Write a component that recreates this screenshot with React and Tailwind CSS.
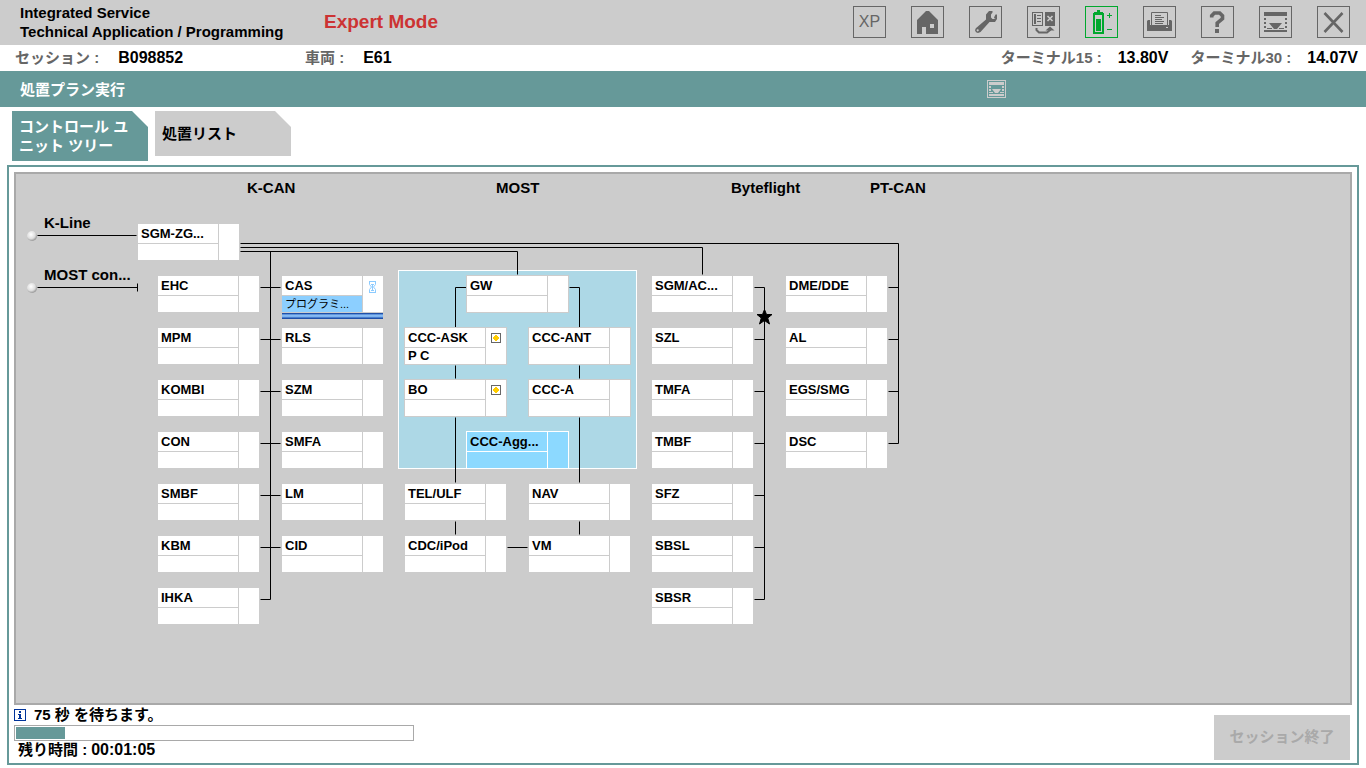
import React from "react";

const ROW_TOP = 101;
const ROW_STEP = 52;

const COLUMNS = [
  { x: 141, names: ["EHC", "MPM", "KOMBI", "CON", "SMBF", "KBM", "IHKA"] },
  { x: 265, names: ["CAS", "RLS", "SZM", "SMFA", "LM", "CID"] },
  { x: 388, names: [null, "CCC-ASK", "BO", null, "TEL/ULF", "CDC/iPod"] },
  { x: 450, names: ["GW", null, null, "CCC-Agg..."] },
  { x: 512, names: [null, "CCC-ANT", "CCC-A", null, "NAV", "VM"] },
  { x: 635, names: ["SGM/AC...", "SZL", "TMFA", "TMBF", "SFZ", "SBSL", "SBSR"] },
  { x: 769, names: ["DME/DDE", "AL", "EGS/SMG", "DSC"] },
];

const DETAILS = {
  CAS: { status: "プログラミ...", busy: true },
  "CCC-ASK": { status: "P C", marked: true },
  BO: { marked: true },
  "CCC-Agg...": { selected: true },
};

const NODES = [
  { name: "SGM-ZG...", x: 121, y: 49 },
  ...COLUMNS.flatMap((col) =>
    col.names
      .map((name, row) => ({ name, x: col.x, y: ROW_TOP + row * ROW_STEP }))
      .filter((n) => n.name)
  ),
];

const BUS_LABELS = [
  { text: "K-CAN", place: "left-[231px] top-1" },
  { text: "MOST", place: "left-[480px] top-1" },
  { text: "Byteflight", place: "left-[715px] top-1" },
  { text: "PT-CAN", place: "left-[854px] top-1" },
  { text: "K-Line", place: "left-[28px] top-[39px]" },
  { text: "MOST con...", place: "left-[28px] top-[91px]" },
];

function Hourglass() {
  return (
    <svg width="9" height="12" viewBox="0 0 9 12" fill="none" stroke="#8ccbff" aria-hidden="true">
      <path d="M1 .5h7M1 11.5h7M1.500 1v2.500l2 2.500-2 2.500V11M7.500 1v2.500l-2 2.500 2 2.500V11" />
      <path d="M3 3.500h3M4.500 4v5M3 9.500h3" />
    </svg>
  );
}

function Marker() {
  return (
    <svg width="10" height="10" viewBox="0 0 10 10" aria-hidden="true">
      <rect x=".5" y=".5" width="9" height="9" fill="#fff" stroke="#666" />
      <path d="M4 2h2v1h1v1h1v2H7v1H6v1H4V7H3V6H2V4h1V3h1z" fill="#fc0" />
    </svg>
  );
}

function ControlUnit({ name, x, y }) {
  const { status, busy, marked, selected } = DETAILS[name] || {};
  const frame = selected ? "border-white bg-white" : "border-[#ccc] bg-[#ccc]";
  const cell = selected ? "bg-[#8cd9ff]" : "bg-white";
  return (
    <div className="absolute" style={{ left: x, top: y }}>
      <button
        type="button"
        className={`grid grid-cols-[80px_20px] grid-rows-[19px_16px] gap-px border text-left ${frame}`}
      >
        <span className={`px-[3px] text-[13px] leading-[19px] font-bold whitespace-nowrap ${cell}`}>{name}</span>
        <span className={`row-span-2 flex pt-[5px] pl-[5px] ${cell}`}>
          {busy && <Hourglass />}
          {marked && <Marker />}
        </span>
        <span
          className={`px-[3px] leading-4 whitespace-nowrap ${
            busy ? "bg-[#8ccfff] text-[11px]" : `text-[13px] font-bold ${cell}`
          }`}
        >
          {status}
        </span>
      </button>
      {busy && (
        <div className="mx-px h-1.5 border-y border-[#2050a8] bg-linear-to-b from-[#4a80d0] via-[#9ccfff] to-[#2c62bc]" />
      )}
    </div>
  );
}

function Wiring() {
  const rows = [0, 1, 2, 3, 4, 5, 6].map((r) => 113 + r * ROW_STEP);
  return (
    <svg className="absolute top-0 left-0" width="900" height="460" viewBox="0 0 900 460" aria-hidden="true">
      <defs>
        <radialGradient id="ball" cx=".4" cy=".35" r=".7">
          <stop offset="0" stopColor="#fff" />
          <stop offset=".6" stopColor="#ddd" />
          <stop offset="1" stopColor="#888" />
        </radialGradient>
      </defs>
      <g transform="translate(.5 .5)" fill="none" stroke="#000">
        <path d="M21 61H120M21 113H121M121 109V117" />
        <path d="M224 69H882V269M224 73H686V100M224 77H501V100M254 77V425" />
        <path d="M450 113H439V153M553 113H563V153M439 191V204M563 191V204M439 243V308M563 243V308M439 347V360M563 347V360M491 373H511" />
        <path d="M748 113V425" />
        {rows.map((y, i) => (
          <path key={y} d={`M244 ${y}H${i < 6 ? 264 : 254}M738 ${y}H748${i < 4 ? `M872 ${y}H882` : ""}`} />
        ))}
      </g>
      <circle cx="16" cy="62" r="5" fill="url(#ball)" />
      <circle cx="16" cy="114" r="5" fill="url(#ball)" />
      <path d="M748.500 135.500l2 5h5.500l-4.300 3.500 1.800 6-5-3.500-5 3.500 1.800-6-4.300-3.500h5.500z" fill="#000" stroke="#000" />
    </svg>
  );
}

const TOOLS = [
  { label: "XP", art: <span className="text-[16px] leading-none">XP</span> },
  {
    label: "Home",
    art: <path fill="currentColor" d="M15 5h3l9 9v14H15v-7h-4v7H6V14zM19 18v4h4v-4z" fillRule="evenodd" />,
  },
  {
    label: "Settings",
    art: (
      <g>
        <path
          fill="currentColor"
          d="M20 5h3.500v1.500L22 8.500v3l1.500 1.500h2.500L28 10v3l-2 3h-5.500L11.500 26 9 27l-2-.8-1-2 .8-2L17 13.500V8.500z"
        />
        <path fill="currentColor" d="M25 11.500l1.500-3h1.500v3l-2 1.500z" />
        <circle cx="8.700" cy="24.300" r="1.100" fill="#ccc" />
      </g>
    ),
  },
  {
    label: "Swap",
    art: (
      <g>
        <path fill="currentColor" fillRule="evenodd" d="M5 6h11v14H5zM6 7v12h9V7z" />
        <path fill="currentColor" d="M7 8h2v10H7zM10 9h4v1h-4zM10 12h4v1h-4zM10 15h4v1h-4zM18 6h10v14H18z" />
        <path stroke="#ccc" strokeWidth="1.600" d="M20.500 10l5 5M25.500 10l-5 5" />
        <path stroke="currentColor" strokeWidth="2" fill="none" d="M9.500 22v2l2.500 2.500h8l3-2.500v-2" />
        <path fill="currentColor" d="M23 20.500l4.500 4h-9z" />
      </g>
    ),
  },
  {
    label: "Battery",
    green: true,
    art: (
      <g>
        <path fill="currentColor" fillRule="evenodd" d="M12 4h3v2h3v1h1v21H8V7h1V6h3zM10 9v17h7V9z" />
        <path fill="currentColor" d="M11 13h5v12h-5zM22 9h5v1h-5zM24 7h1v5h-1zM22 23h5v1h-5z" />
      </g>
    ),
  },
  {
    label: "Print",
    art: (
      <g>
        <path fill="currentColor" d="M4 15l1-1h2v5h19v-5h2l1 1v10H4z" />
        <path fill="#ccc" stroke="currentColor" d="M8.500 19.500v-13h16v13z" />
        <path fill="#ccc" d="M23 21h2v1h-2z" />
        <path stroke="currentColor" d="M12 9.500h6M12 11.500h9M12 13.500h7M12 15.500h9M12 17.500h8" />
      </g>
    ),
  },
  {
    label: "Help",
    art: (
      <g>
        <path stroke="currentColor" strokeWidth="3.600" fill="none" d="M10.700 11.500V9.800L13.300 7h5.400l2.800 2.700v3L16.200 17v4" />
        <path fill="currentColor" d="M14 23h4v4h-4z" />
      </g>
    ),
  },
  {
    label: "Collapse",
    art: (
      <path
        fill="currentColor"
        d="M5 6h23v4H5zM10 17h13l-5 6h-3zM5 24h23v2H5zM5 12h2v2H5zM5 16h2v2H5zM5 20h2v2H5zM26 12h2v2h-2zM26 16h2v2h-2zM26 20h2v2h-2zM8 22h5v1H8zM20 22h5v1h-5z"
      />
    ),
  },
  {
    label: "Close",
    art: <path stroke="currentColor" strokeWidth="2.600" d="M7.500 7l18 19M25.500 7l-18 19" />,
  },
];

function ToolButton({ label, art, green }) {
  return (
    <button
      type="button"
      aria-label={label}
      className={`relative flex h-8 w-[33px] items-center justify-center border ${
        green ? "border-[#00a82d] text-[#00a82d]" : "border-[#666] text-[#666]"
      }`}
    >
      {label === "XP" ? (
        art
      ) : (
        <svg className="absolute -top-px -left-px" width="33" height="32" viewBox="0 0 33 32" aria-hidden="true">
          {art}
        </svg>
      )}
    </button>
  );
}

function Field({ label, value, className }) {
  return (
    <div className={`flex items-baseline ${className}`}>
      <span className="text-[#666]">{label}</span>
      <span className="text-[16px]">{value}</span>
    </div>
  );
}

export default function App() {
  return (
    <div className="flex min-h-screen flex-col bg-white font-['Liberation_Sans','Noto_Sans_CJK_JP',sans-serif] text-black">
      <header className="flex h-[45px] items-center bg-[#ccc] pr-4 pb-px pl-5">
        <h1 className="w-[304px] text-[15px] leading-[19px] font-bold whitespace-nowrap">
          Integrated Service
          <br />
          Technical Application / Programming
        </h1>
        <p className="flex-1 text-[19px] font-bold text-[#cc3333]">Expert Mode</p>
        <nav className="flex gap-[25px]">
          {TOOLS.map((t) => (
            <ToolButton key={t.label} {...t} />
          ))}
        </nav>
      </header>

      <div className="flex h-[26px] items-center pr-2 pl-[15px] text-[15px] leading-5 font-bold whitespace-nowrap">
        <Field label="セッション :" value="B098852" className="w-[290px] gap-[19px]" />
        <Field label="車両 :" value="E61" className="flex-1 gap-[19px]" />
        <Field label="ターミナル15 :" value="13.80V" className="mr-[22px] gap-4" />
        <Field label="ターミナル30 :" value="14.07V" className="gap-4" />
      </div>

      <div className="flex h-9 items-center bg-[#669999] pr-[360px] pl-5">
        <h2 className="flex-1 pt-[3px] text-[15px] font-bold text-white">処置プラン実行</h2>
        <button type="button" aria-label="Show details" className="text-[#ccc]">
          <svg width="19" height="18" viewBox="0 0 19 18" aria-hidden="true">
            <rect x=".5" y=".5" width="18" height="17" fill="none" stroke="currentColor" />
            <path
              fill="currentColor"
              d="M2 2h15v3H2zM5 9h9l-3 4H8zM2 14h15v2H2zM2 6h2v2H2zM2 9h2v2H2zM2 12h4v1H2zM15 6h2v2h-2zM15 9h2v2h-2zM13 12h4v1h-4z"
            />
          </svg>
        </button>
      </div>

      <div role="tablist" className="flex items-start gap-[7px] px-3 py-1 text-[15px] leading-[19px] font-bold">
        <button
          type="button"
          role="tab"
          aria-selected="true"
          className="h-[50px] w-[136px] bg-[#669999] px-[7px] text-left text-white [clip-path:polygon(0_0,calc(100%-16px)_0,100%_16px,100%_100%,0_100%)]"
        >
          コントロール ユ<br />
          ニット ツリー
        </button>
        <button
          type="button"
          role="tab"
          aria-selected="false"
          className="h-[45px] w-[136px] bg-[#ccc] px-[7px] text-left [clip-path:polygon(0_0,calc(100%-16px)_0,100%_16px,100%_100%,0_100%)]"
        >
          処置リスト
        </button>
      </div>

      <main className="mr-[7px] mb-[3px] ml-[7px] flex flex-1 flex-col border-2 border-[#669999] p-[5px] pb-[3px]">
        <div className="relative min-h-[480px] flex-1 border-2 border-[#a9a9a9] bg-[#ccc]">
          <div className="absolute top-24 left-[382px] h-[199px] w-[239px] border border-white bg-[#add8e6]" />
          <Wiring />
          {BUS_LABELS.map((b) => (
            <span key={b.text} className={`absolute text-[15px] leading-5 font-bold whitespace-nowrap ${b.place}`}>
              {b.text}
            </span>
          ))}
          {NODES.map((n) => (
            <ControlUnit key={n.name} {...n} />
          ))}
        </div>

        <footer className="flex items-end justify-between pr-0.5">
          <div className="text-[15px] leading-5 font-bold">
            <p className="flex items-center gap-2">
              <svg width="12" height="12" viewBox="0 0 12 12" aria-hidden="true">
                <rect x=".5" y=".5" width="11" height="11" fill="#fff" stroke="#003399" />
                <path fill="#003399" d="M5 2h2v2H5zM4 5h3v4h1v1H4V9h1V6H4z" />
              </svg>
              <span>75 秒 を待ちます。</span>
            </p>
            <div
              role="progressbar"
              aria-label="残り時間"
              aria-valuenow="12"
              aria-valuemin="0"
              aria-valuemax="100"
              className="h-4 w-[400px] border border-[#a9a9a9] p-px"
            >
              <div className="h-full w-[49px] bg-[#669999]" />
            </div>
            <p className="flex items-baseline gap-1 pb-0.5 pl-1 leading-[17px]">
              <span>残り時間 :</span>
              <span className="text-[16px]">00:01:05</span>
            </p>
          </div>
          <button type="button" disabled className="h-[45px] w-[136px] bg-[#ccc] text-[15px] font-bold text-[#a9a9a9]">
            セッション終了
          </button>
        </footer>
      </main>
    </div>
  );
}
